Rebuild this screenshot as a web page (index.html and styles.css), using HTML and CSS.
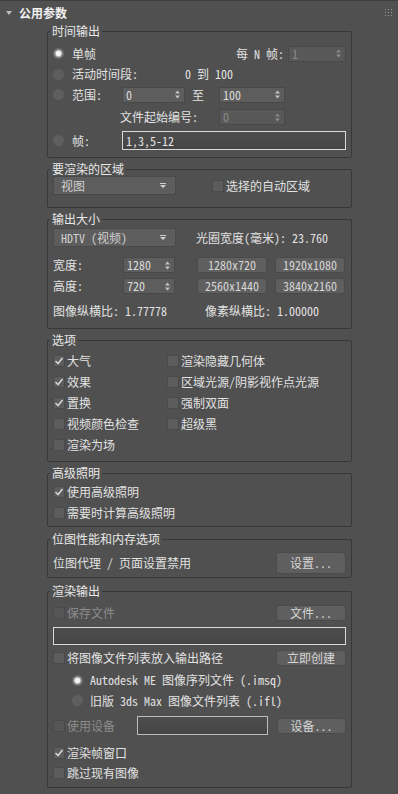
FILE: index.html
```html
<!DOCTYPE html>
<html lang="zh-CN">
<head>
    <meta charset="UTF-8">
    <meta name="viewport" content="width=device-width, initial-scale=1.0">
    <title>公用参数</title>
    <link rel="stylesheet" href="styles.css">
</head>
<body>
<div class="panel">
    <div class="rollout-head">
        <span class="tri"></span>
        <span class="title">公用参数</span>
        <svg class="grip" width="7" height="7" viewBox="0 0 7 7">
            <rect x="0" y="0" width="1" height="1"/><rect x="3" y="0" width="1" height="1"/><rect x="6" y="0" width="1" height="1"/>
            <rect x="0" y="3" width="1" height="1"/><rect x="3" y="3" width="1" height="1"/><rect x="6" y="3" width="1" height="1"/>
            <rect x="0" y="6" width="1" height="1"/><rect x="3" y="6" width="1" height="1"/><rect x="6" y="6" width="1" height="1"/>
        </svg>
    </div>

    <!-- time output -->
    <fieldset class="group g-time">
        <legend>时间输出</legend>
        <div class="row h21">
            <span class="radio on"></span><span>单帧</span>
            <span class="push every">每 N 帧:</span>
            <span class="spin off sp-n"><span class="val">1</span><svg class="arr" width="5" height="9" viewBox="0 0 5 9"><path d="M0 3.5L2.5 0.5L5 3.5Z M0 5.5L2.5 8.5L5 5.5Z"/></svg></span>
        </div>
        <div class="row h20">
            <span class="radio"></span><span class="lbl-active">活动时间段:</span><span>0 到 100</span>
        </div>
        <div class="row h21">
            <span class="radio"></span><span class="lbl-range">范围:</span>
            <span class="spin sp-from"><span class="val">0</span><svg class="arr" width="5" height="9" viewBox="0 0 5 9"><path d="M0 3.5L2.5 0.5L5 3.5Z M0 5.5L2.5 8.5L5 5.5Z"/></svg></span>
            <span class="to">至</span>
            <span class="spin sp-to"><span class="val">100</span><svg class="arr" width="5" height="9" viewBox="0 0 5 9"><path d="M0 3.5L2.5 0.5L5 3.5Z M0 5.5L2.5 8.5L5 5.5Z"/></svg></span>
        </div>
        <div class="row h24">
            <span class="lbl-start">文件起始编号:</span>
            <span class="spin off sp-to"><span class="val">0</span><svg class="arr" width="5" height="9" viewBox="0 0 5 9"><path d="M0 3.5L2.5 0.5L5 3.5Z M0 5.5L2.5 8.5L5 5.5Z"/></svg></span>
        </div>
        <div class="row h23">
            <span class="radio"></span><span class="lbl-range">帧:</span>
            <span class="field grow">1,3,5-12</span>
        </div>
    </fieldset>

    <!-- area to render -->
    <fieldset class="group g-region">
        <legend>要渲染的区域</legend>
        <div class="row h19">
            <span class="drop"><span>视图</span><svg class="darr" width="6" height="5" viewBox="0 0 6 5"><path d="M0 0H6V1H0Z M0 2H6L3 5Z"/></svg></span>
            <span class="check ml-region"></span><span>选择的自动区域</span>
        </div>
    </fieldset>

    <!-- output size -->
    <fieldset class="group g-size">
        <legend>输出大小</legend>
        <div class="row h19">
            <span class="drop"><span>HDTV (视频)</span><svg class="darr" width="6" height="5" viewBox="0 0 6 5"><path d="M0 0H6V1H0Z M0 2H6L3 5Z"/></svg></span>
            <span class="aperture">光圈宽度(毫米): 23.760</span>
        </div>
        <div class="row h16 mt10">
            <span class="lbl-dim">宽度:</span>
            <span class="spin sp-dim"><span class="val">1280</span><svg class="arr" width="5" height="9" viewBox="0 0 5 9"><path d="M0 3.5L2.5 0.5L5 3.5Z M0 5.5L2.5 8.5L5 5.5Z"/></svg></span>
            <span class="btn first">1280x720</span>
            <span class="btn next">1920x1080</span>
        </div>
        <div class="row h16 mt5">
            <span class="lbl-dim">高度:</span>
            <span class="spin sp-dim"><span class="val">720</span><svg class="arr" width="5" height="9" viewBox="0 0 5 9"><path d="M0 3.5L2.5 0.5L5 3.5Z M0 5.5L2.5 8.5L5 5.5Z"/></svg></span>
            <span class="btn first">2560x1440</span>
            <span class="btn next">3840x2160</span>
        </div>
        <div class="row h18 mt8">
            <span class="ratio">图像纵横比: 1.77778</span>
            <span>像素纵横比: 1.00000</span>
        </div>
    </fieldset>

    <!-- options -->
    <fieldset class="group g-options">
        <legend>选项</legend>
        <div class="opts">
            <div class="row"><span class="check on"><svg width="10" height="10" viewBox="0 0 10 10"><path d="M1.5 5L4 7.5L8.5 2"/></svg></span><span>大气</span></div>
            <div class="row"><span class="check"></span><span>渲染隐藏几何体</span></div>
            <div class="row"><span class="check on"><svg width="10" height="10" viewBox="0 0 10 10"><path d="M1.5 5L4 7.5L8.5 2"/></svg></span><span>效果</span></div>
            <div class="row"><span class="check"></span><span>区域光源/阴影视作点光源</span></div>
            <div class="row"><span class="check on"><svg width="10" height="10" viewBox="0 0 10 10"><path d="M1.5 5L4 7.5L8.5 2"/></svg></span><span>置换</span></div>
            <div class="row"><span class="check"></span><span>强制双面</span></div>
            <div class="row"><span class="check"></span><span>视频颜色检查</span></div>
            <div class="row"><span class="check"></span><span>超级黑</span></div>
            <div class="row"><span class="check"></span><span>渲染为场</span></div>
        </div>
    </fieldset>

    <!-- advanced lighting -->
    <fieldset class="group g-light">
        <legend>高级照明</legend>
        <div class="row h21"><span class="check on"><svg width="10" height="10" viewBox="0 0 10 10"><path d="M1.5 5L4 7.5L8.5 2"/></svg></span><span>使用高级照明</span></div>
        <div class="row h21"><span class="check"></span><span>需要时计算高级照明</span></div>
    </fieldset>

    <!-- bitmap performance -->
    <fieldset class="group g-bitmap">
        <legend>位图性能和内存选项</legend>
        <div class="row h22">
            <span>位图代理 / 页面设置禁用</span>
            <span class="btn push tall">设置...</span>
        </div>
    </fieldset>

    <!-- render output -->
    <fieldset class="group g-output">
        <legend>渲染输出</legend>
        <div class="row h17">
            <span class="check off"></span><span class="dim">保存文件</span>
            <span class="btn push">文件...</span>
        </div>
        <div class="field wide mt6"></div>
        <div class="row h16 mt5">
            <span class="check"></span><span>将图像文件列表放入输出路径</span>
            <span class="btn push">立即创建</span>
        </div>
        <div class="row h20 mt4 indent">
            <span class="radio on"></span><span>Autodesk ME 图像序列文件 (.imsq)</span>
        </div>
        <div class="row h21 indent">
            <span class="radio"></span><span>旧版 3ds Max 图像文件列表 (.ifl)</span>
        </div>
        <div class="row h19 mt5">
            <span class="check off"></span><span class="dim lbl-device">使用设备</span>
            <span class="field device"></span>
            <span class="btn push device-btn">设备...</span>
        </div>
        <div class="row h20 mt8"><span class="check on"><svg width="10" height="10" viewBox="0 0 10 10"><path d="M1.5 5L4 7.5L8.5 2"/></svg></span><span>渲染帧窗口</span></div>
        <div class="row h20"><span class="check"></span><span>跳过现有图像</span></div>
    </fieldset>
</div>
</body>
</html>
```

FILE: styles.css
```css
* {
    box-sizing: border-box;
}
html, body {
    margin: 0;
    padding: 0;
}
body {
    background: #505050;
    color: #e2e2e2;
    font-family: "Noto Sans Mono CJK SC", "Noto Sans CJK SC", "DejaVu Sans Mono", monospace;
    font-size: 12px;
    line-height: 14px;
}
.panel {
    width: 398px;
    height: 794px;
    border-top: 1px solid #3f3f3f;
    overflow: hidden;
}

/* rollout header */
.rollout-head {
    height: 24px;
    display: flex;
    align-items: center;
    padding-left: 6px;
}
.tri {
    width: 0;
    height: 0;
    border-left: 3px solid transparent;
    border-right: 3px solid transparent;
    border-top: 4px solid #bdbdbd;
    margin-right: 7px;
}
.title {
    font-weight: bold;
    color: #f0f0f0;
}
.grip {
    margin-left: auto;
    margin-right: 6px;
    margin-top: -2px;
    fill: #9a9a9a;
}

/* group boxes */
.group {
    margin: 5px 46px 0 47px;
    padding: 0 5px;
    border: 1px solid #383838;
    border-radius: 2px;
    min-width: 0;
}
.group legend {
    margin-left: -3px;
    padding: 0 2px;
    height: 12px;
    line-height: 12px;
    color: #e8e8e8;
}
.g-time { margin-top: 0; padding-top: 6px; padding-bottom: 5px; }
.g-region { padding-top: 1px; padding-bottom: 12px; }
.g-size { padding-top: 3px; padding-bottom: 8px; }
.g-options { padding-top: 4px; padding-bottom: 6px; }
.g-light { padding-top: 2px; padding-bottom: 3px; }
.g-bitmap { margin-top: 6px; padding-top: 7px; padding-bottom: 3px; }
.g-output { margin-top: 7px; padding-top: 7px; padding-bottom: 4px; }

.row {
    display: flex;
    align-items: center;
    white-space: nowrap;
}
.h16 { height: 16px; }
.h17 { height: 17px; }
.h18 { height: 18px; }
.h19 { height: 19px; }
.h20 { height: 20px; }
.h21 { height: 21px; }
.h22 { height: 22px; }
.h23 { height: 23px; }
.h24 { height: 24px; }
.mt4 { margin-top: 4px; }
.mt5 { margin-top: 5px; }
.mt6 { margin-top: 6px; }
.mt8 { margin-top: 8px; }
.mt10 { margin-top: 10px; }
.push { margin-left: auto; }
.grow { flex: 1; }
.dim { color: #8c8c8c; }

/* radio + checkbox */
.radio {
    flex: none;
    width: 11px;
    height: 11px;
    border-radius: 50%;
    background: #5e5e5e;
    margin-right: 8px;
}
.radio.on {
    background: radial-gradient(circle, #f2f2f2 0 2.3px, #b0b0b0 3.2px, #7a7a7a 4.2px, #626262 5.5px);
}
.check {
    flex: none;
    width: 12px;
    height: 12px;
    background: #5c5c5c;
    border: 1px solid #4a4a4a;
    margin-right: 2px;
    display: flex;
    align-items: center;
    justify-content: center;
}
.check svg {
    fill: none;
    stroke: #d4d4d4;
    stroke-width: 1.6;
}
.check.off {
    background: #565656;
}

/* spinners */
.spin {
    flex: none;
    display: flex;
    align-items: center;
    height: 16px;
    padding: 0 4px 0 3px;
    background: #5d5d5d;
    border: 1px solid #484848;
    color: #dcdcdc;
}
.spin .val {
    flex: 1;
}
.spin .arr {
    fill: #c4c4c4;
}
.spin.off {
    background: #585858;
    color: #8a8a8a;
}
.spin.off .arr {
    fill: #8a8a8a;
}
.sp-n { width: 58px; }
.sp-from { width: 63px; }
.sp-to { width: 66px; }
.sp-dim { width: 52px; }
.every { margin-right: 4px; }
.lbl-active { width: 113px; }
.lbl-range { width: 50px; }
.lbl-start { margin-left: 67px; width: 99px; }
.to { margin-left: 7px; margin-right: 15px; }

/* text fields */
.field {
    height: 19px;
    line-height: 17px;
    padding-left: 3px;
    border: 1px solid #dadada;
    background: linear-gradient(#4e4e4e, #454545);
}
.field.wide { height: 18px; }
.field.device {
    width: 131px;
    border-color: #bcbcbc;
}
.lbl-device { width: 70px; }

/* dropdowns */
.drop {
    flex: none;
    width: 123px;
    height: 19px;
    display: flex;
    align-items: center;
    justify-content: space-between;
    padding: 0 9px 0 7px;
    background: #5d5d5d;
    border: 1px solid #494949;
    color: #cfcfcf;
}
.darr {
    fill: #cfcfcf;
}
.ml-region { margin-left: 36px; }
.aperture { margin-left: 20px; }
.lbl-dim { width: 70px; }
.ratio { width: 152px; }

/* buttons */
.btn {
    flex: none;
    width: 70px;
    height: 16px;
    display: flex;
    align-items: center;
    justify-content: center;
    background: #5f5f5f;
    border: 1px solid #4a4a4a;
    border-radius: 3px;
    color: #d6d6d6;
}
.btn.first { margin-left: 22px; }
.btn.next { margin-left: 8px; }
.btn.tall { height: 22px; }
.btn.device-btn { width: 69px; }

/* options grid */
.opts {
    display: grid;
    grid-template-columns: 114px 1fr;
    grid-auto-rows: 21px;
}
.indent { padding-left: 19px; }
.indent .radio { margin-right: 7px; }
```
